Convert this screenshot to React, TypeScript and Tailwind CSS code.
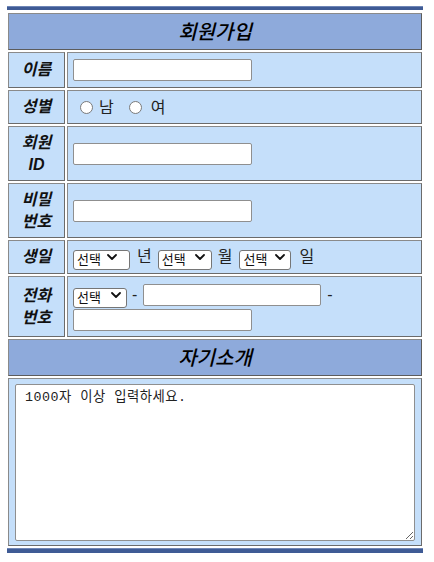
import { useState } from "react";

const cell = "border border-[#8a8a8a] border-r-[#6b6b6b] border-b-[#6b6b6b] bg-[#c5dffa]";
const head = "border border-[#8a8a8a] border-r-[#5c5c5c] border-b-[#5c5c5c] bg-[#8eaadb]";
const label =
  "w-[57px] shrink-0 flex items-center justify-center text-center font-bold italic text-[16px] leading-[22px] text-[#111]";

const Chevron = () => (
  <svg width="10" height="6" viewBox="0 0 10 6" className="block">
    <path d="M1 1l4 4 4-4" fill="none" stroke="#111" strokeWidth="1.8" strokeLinecap="round" strokeLinejoin="round" />
  </svg>
);

// fake native select, widths match the screenshot
const Pick = ({ box, arrow }: { box: string; arrow: string }) => (
  <span className={"relative inline-block shrink-0 " + box}>
    <select className="h-full w-full appearance-none rounded-[3px] border border-[#767676] bg-white pl-[3px] text-[13px] leading-[18px] text-[#111] outline-none">
      <option>선택</option>
    </select>
    <span className={"pointer-events-none absolute top-[7px] " + arrow}>
      <Chevron />
    </span>
  </span>
);

const Field = ({ w = "w-[179px]" }: { w?: string }) => (
  <input type="text" className={"h-[22px] shrink-0 rounded-[2px] border border-[#8f8f8f] bg-white px-[2px] text-[13px] outline-none " + w} />
);

const Radio = ({ name, on, set }: { name: string; on: boolean; set: () => void }) => (
  <input
    type="radio"
    name="gender"
    value={name}
    checked={on}
    onChange={set}
    className="block h-[13px] w-[13px] shrink-0 appearance-none rounded-full border border-[#7a7a7a] bg-white checked:border-[4px] checked:border-[#0075ff]"
  />
);

export default function App() {
  const [gender, setGender] = useState("");

  return (
    <div className="pt-[6px] pl-[7px] font-['Liberation_Sans','Noto_Sans_CJK_KR',sans-serif] text-black">
      <div className="w-[416px]">
        <div className="h-[4px] bg-[#3f5b95] border-t border-[#6f86b6]" />
        <div className="mt-[3px] ml-[1px] flex w-[414px] flex-col gap-[2px]">
          <div className={head + " flex h-[37px] items-center justify-center text-[20px] italic font-medium"}>회원가입</div>

          <div className="flex h-[36px] gap-[2px]">
            <div className={cell + " " + label}>이름</div>
            <div className={cell + " flex flex-1 items-center pl-[5px]"}>
              <Field />
            </div>
          </div>

          <div className="flex h-[34px] gap-[2px]">
            <div className={cell + " " + label}>성별</div>
            <div className={cell + " flex flex-1 items-center pl-[5px] text-[16px] text-[#222]"}>
              <span className="ml-[7px] flex pt-[1px]"><Radio name="m" on={gender === "m"} set={() => setGender("m")} /></span>
              <span className="ml-[6px] pt-[2px]">남</span>
              <span className="ml-[15px] flex pt-[1px]"><Radio name="f" on={gender === "f"} set={() => setGender("f")} /></span>
              <span className="ml-[9px] pt-[2px]">여</span>
            </div>
          </div>

          <div className="flex h-[55px] gap-[2px]">
            <div className={cell + " " + label}>
              회원
              <br />
              ID
            </div>
            <div className={cell + " flex flex-1 items-center pl-[5px]"}>
              <Field />
            </div>
          </div>

          <div className="flex h-[55px] gap-[2px]">
            <div className={cell + " " + label}>
              비밀
              <br />
              번호
            </div>
            <div className={cell + " flex flex-1 items-center pl-[5px]"}>
              <Field />
            </div>
          </div>

          <div className="flex h-[34px] gap-[2px]">
            <div className={cell + " " + label}>생일</div>
            <div className={cell + " flex flex-1 items-center pl-[5px] text-[16px] text-[#222]"}>
              <Pick box="w-[57px] h-[20px]" arrow="right-[13px]" />
              <span className="ml-[7px]">년</span>
              <span className="ml-[6px] flex"><Pick box="w-[54px] h-[20px]" arrow="right-[7px]" /></span>
              <span className="ml-[6px]">월</span>
              <span className="ml-[7px] flex"><Pick box="w-[52px] h-[20px]" arrow="right-[6px]" /></span>
              <span className="ml-[8px]">일</span>
            </div>
          </div>

          <div className="flex h-[61px] gap-[2px]">
            <div className={cell + " " + label}>
              전화
              <br />
              번호
            </div>
            <div className={cell + " flex flex-1 flex-wrap content-center items-center gap-y-[1px] pl-[5px] text-[16px] text-[#222]"}>
              <Pick box="w-[54px] h-[20px]" arrow="right-[6px]" />
              <span className="ml-[5px]">-</span>
              <span className="ml-[6px] flex"><Field w="w-[178px]" /></span>
              <span className="ml-[6px]">-</span>
              <div className="h-0 basis-full" />
              <Field />
            </div>
          </div>

          <div className={head + " flex h-[37px] items-center justify-center text-[20px] italic font-medium"}>자기소개</div>

          <div className={cell + " h-[168px] pt-[5px] pl-[6px]"}>
            <textarea
              defaultValue="1000자 이상 입력하세요."
              className="block h-[157px] w-[400px] rounded-[2px] border border-[#8f8f8f] bg-white pt-[5px] pl-[9px] font-['Liberation_Mono','Noto_Sans_CJK_KR',monospace] text-[13.33px] leading-[16px] tracking-[0.5px] text-[#222] outline-none"
            />
          </div>
        </div>
        <div className="mt-[2px] h-[5px] bg-[#3f5b95] border-t border-[#6f86b6]" />
      </div>
    </div>
  );
}
